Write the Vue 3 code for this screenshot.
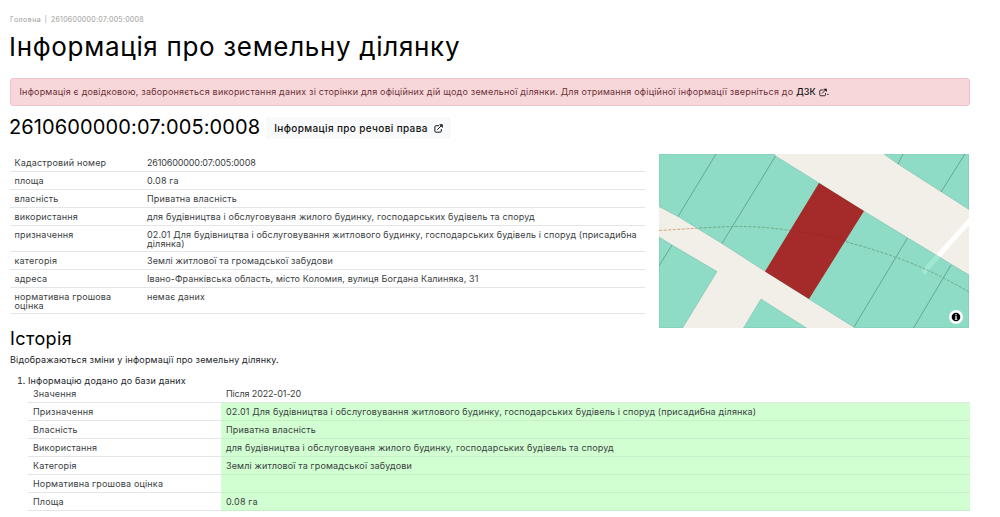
<script setup>
import { ref } from 'vue';

const parcelNumber = '2610600000:07:005:0008';

const details = ref([
  { label: 'Кадастровий номер', value: parcelNumber, numeric: true },
  { label: 'площа', value: '0.08 га' },
  { label: 'власність', value: 'Приватна власність' },
  { label: 'використання', value: 'для будівництва і обслуговуваня жилого будинку, господарських будівель та споруд' },
  { label: 'призначення', value: '02.01 Для будівництва і обслуговування житлового будинку, господарських будівель і споруд (присадибна ділянка)' },
  { label: 'категорія', value: 'Землі житлової та громадської забудови' },
  { label: 'адреса', value: 'Івано-Франківська область, місто Коломия, вулиця Богдана Калиняка, 31', address: true },
  { label: 'нормативна грошова оцінка', value: 'немає даних' },
]);

const changes = ref([
  { label: 'Призначення', value: '02.01 Для будівництва і обслуговування житлового будинку, господарських будівель і споруд (присадибна ділянка)' },
  { label: 'Власність', value: 'Приватна власність' },
  { label: 'Використання', value: 'для будівництва і обслуговуваня жилого будинку, господарських будівель та споруд' },
  { label: 'Категорія', value: 'Землі житлової та громадської забудови' },
  { label: 'Нормативна грошова оцінка', value: '' },
  { label: 'Площа', value: '0.08 га' },
]);
</script>

<template>
  <main class="page">
    <nav class="breadcrumbs">
      <a>Головна</a><span class="divider">|</span><span class="crumb-number">{{ parcelNumber }}</span>
    </nav>

    <h1>Інформація про земельну ділянку</h1>

    <div class="alert">
      <span>Інформація є довідковою, забороняється використання даних зі сторінки для офіційних дій щодо земельної ділянки. Для отримання офіційної інформації зверніться до</span>
      <a class="alert-link">ДЗК</a>
      <svg class="link-icon" viewBox="0 0 16 16">
        <path d="M9 3H3.5Q1.5 3 1.5 5V12.5Q1.5 14.5 3.5 14.5H11Q13 14.5 13 12.5V9" />
        <path d="M6 10L14 2" />
        <path class="arrow" d="M9 0.5H15.5V7Z" />
      </svg><span class="dot">.</span>
    </div>

    <div class="heading">
      <h2>{{ parcelNumber }}</h2>
      <a class="rights-button">
        <span>Інформація про речові права</span>
        <svg class="link-icon" viewBox="0 0 16 16">
          <path d="M9 3H3.5Q1.5 3 1.5 5V12.5Q1.5 14.5 3.5 14.5H11Q13 14.5 13 12.5V9" />
          <path d="M6 10L14 2" />
          <path class="arrow" d="M9 0.5H15.5V7Z" />
        </svg>
      </a>
    </div>

    <section class="info">
      <table class="details">
        <tbody>
          <tr v-for="row in details" :key="row.label">
            <td class="label">{{ row.label }}</td>
            <td :class="{ numeric: row.numeric, address: row.address }">{{ row.value }}</td>
          </tr>
        </tbody>
      </table>

      <div class="map">
        <svg class="map-canvas" viewBox="0 0 310 174">
          <rect width="310" height="174" fill="#f2efe9" />
          <path class="road" d="M314 63L264 119" />
          <path class="trail" d="M0 76.5Q40 74 74 72.5Q100 72 128 76Q180 83 236 103Q275 117 310 138" />
          <g class="parcel">
            <path d="M0 0H115L116.5 2L160 29L204.5 57L310 121V174H196L150 145L106.5 117.5L63 89.5L19 62.5L0 52.5Z" />
            <path d="M225 0L239 10L310 55.5V0Z" />
            <path d="M0 83L13 91L58 117.5L23.5 174H0Z" />
            <path d="M102 145L147.5 174H84.5Z" />
          </g>
          <g class="border">
            <path d="M57 0L19 62.5M116.5 2L63 89.5M248.5 84L195 173M292 111L254.5 174" />
            <path d="M306 0L282 38M244 0L239 10M13 91L0 112" />
          </g>
          <path class="road covered" d="M279 102L264 119" />
          <path class="trail covered" d="M40 74Q58 73 74 72.5Q100 72 128 76Q180 83 236 103Q275 117 310 138" />
          <path class="selected" d="M160 29L205 57L150 145L106 117.5Z" />
          <path class="trail dim" d="M139 77.5Q165 81 188 87" />
        </svg>
        <svg class="attribution" viewBox="0 0 14 14">
          <circle cx="7" cy="7" r="7" fill="#fff" />
          <circle cx="7" cy="7" r="4.3" fill="#000" />
          <circle cx="7" cy="4.8" r="0.8" fill="#fff" />
          <path d="M6 6.2H7.7V9H8.3V9.8H5.8V9H6.4V7H6Z" fill="#fff" />
        </svg>
      </div>
    </section>

    <section class="history">
      <h3>Історія</h3>
      <p>Відображаються зміни у інформації про земельну ділянку.</p>
      <ol>
        <li>
          <span class="item-title">Інформацію додано до бази даних</span>
          <table>
            <tbody>
              <tr>
                <td class="label">Значення</td>
                <td class="numeric">Після 2022-01-20</td>
              </tr>
              <tr v-for="row in changes" :key="row.label">
                <td class="label">{{ row.label }}</td>
                <td class="added">{{ row.value }}</td>
              </tr>
            </tbody>
          </table>
        </li>
      </ol>
    </section>
  </main>
</template>

<style>
body {
  margin: 0;
  background: #fff;
}
</style>

<style scoped>
.page {
  padding: 14px 30px 0 10px;
  color: #212529;
  font-family: Inter, 'Noto Sans', sans-serif;
  font-size: 9px;
  line-height: 12px;
  letter-spacing: 0.145px;
}

.breadcrumbs {
  height: 12px;
  color: #9c9c9c;
  font-size: 7px;
  letter-spacing: 0.45px;
  white-space: nowrap;
}

.crumb-number {
  letter-spacing: 0.27px;
}

.divider {
  margin: 0 3.5px;
}

h1,
h2,
h3,
p {
  margin: 0;
  font-weight: 400;
  color: #000;
  white-space: nowrap;
}

h1 {
  height: 32px;
  margin: 5px 0 0 -1px;
  font-size: 26px;
  line-height: 32px;
  letter-spacing: 0.68px;
}

.alert {
  box-sizing: border-box;
  display: flex;
  align-items: center;
  height: 28px;
  margin-top: 15px;
  padding: 0 9px 0 8.5px;
  border: 1px solid #ecc3ca;
  border-radius: 3px;
  background: #f8d7da;
  color: #6b3238;
  letter-spacing: 0.2px;
  white-space: nowrap;
}

.alert-link {
  margin: 0 3px;
  color: #111;
  font-weight: 500;
  letter-spacing: 0;
}

.link-icon {
  flex: none;
  width: 9px;
  height: 9px;
  fill: none;
  stroke: #111;
  stroke-width: 1.7;
}

.alert .link-icon {
  width: 8px;
}

.link-icon .arrow {
  fill: #111;
  stroke: none;
}

.dot {
  color: #111;
}

.heading {
  display: flex;
  align-items: center;
  gap: 6px;
  height: 22px;
  margin-top: 11px;
}

h2 {
  margin: -2px 0 0 -1px;
  font-size: 20px;
  line-height: 22px;
  letter-spacing: 0.12px;
}

.rights-button {
  display: flex;
  align-items: center;
  gap: 6px;
  height: 22px;
  padding: 0 8px;
  border-radius: 3px;
  background: #f8f9fa;
  color: #111;
  font-size: 10px;
  font-weight: 500;
  letter-spacing: 0.36px;
  white-space: nowrap;
}

.info {
  display: flex;
  gap: 14px;
  height: 174px;
  margin-top: 15px;
}

table {
  border-collapse: separate;
  border-spacing: 0;
  table-layout: fixed;
}

td {
  box-sizing: border-box;
  height: 18px;
  padding: 5px 5px 3px;
  border-bottom: 1px solid #e4e5e6;
  color: #3a3e42;
  line-height: 8.5px;
  vertical-align: top;
}

td.label {
  padding-left: 4.5px;
  letter-spacing: 0.17px;
}

td.numeric {
  letter-spacing: -0.15px;
}

td.address {
  letter-spacing: 0.1px;
}

.details {
  width: 635px;
  align-self: flex-start;
}

.details .label {
  width: 132px;
}

.map {
  position: relative;
  width: 310px;
  height: 174px;
}

.map-canvas {
  display: block;
  width: 310px;
  height: 174px;
}

.parcel path {
  fill: #8edbc6;
  stroke: #77b8a7;
  stroke-width: 0.5;
}

.border path {
  fill: none;
  stroke: #568f80;
  stroke-width: 0.7;
}

.road {
  fill: none;
  stroke: #fff;
  stroke-width: 5;
}

.road.covered {
  stroke: #a0e8d3;
}

.trail {
  fill: none;
  stroke: #c99a62;
  stroke-width: 0.9;
  stroke-dasharray: 3 1.5;
}

.trail.covered {
  stroke: #69a67f;
}

.trail.dim {
  stroke: #9a2424;
}

.selected {
  fill: #a52a2a;
}

.attribution {
  position: absolute;
  right: 6px;
  bottom: 4px;
  width: 14px;
  height: 14px;
}

h3 {
  padding-top: 1px;
  font-size: 18px;
  line-height: 20px;
  letter-spacing: 0.4px;
}

p {
  margin-top: 5px;
  color: #212529;
  letter-spacing: 0.165px;
}

ol {
  margin: 10px 0 0;
  padding-left: 18px;
}

li {
  line-height: 9px;
}

.item-title {
  display: block;
  height: 9px;
  letter-spacing: 0.19px;
}

.history table {
  width: 942px;
}

.history .label {
  width: 193px;
  padding-left: 5px;
}

.added {
  background: #d1ffd1;
  border-bottom-color: #c7efcb;
}
</style>
